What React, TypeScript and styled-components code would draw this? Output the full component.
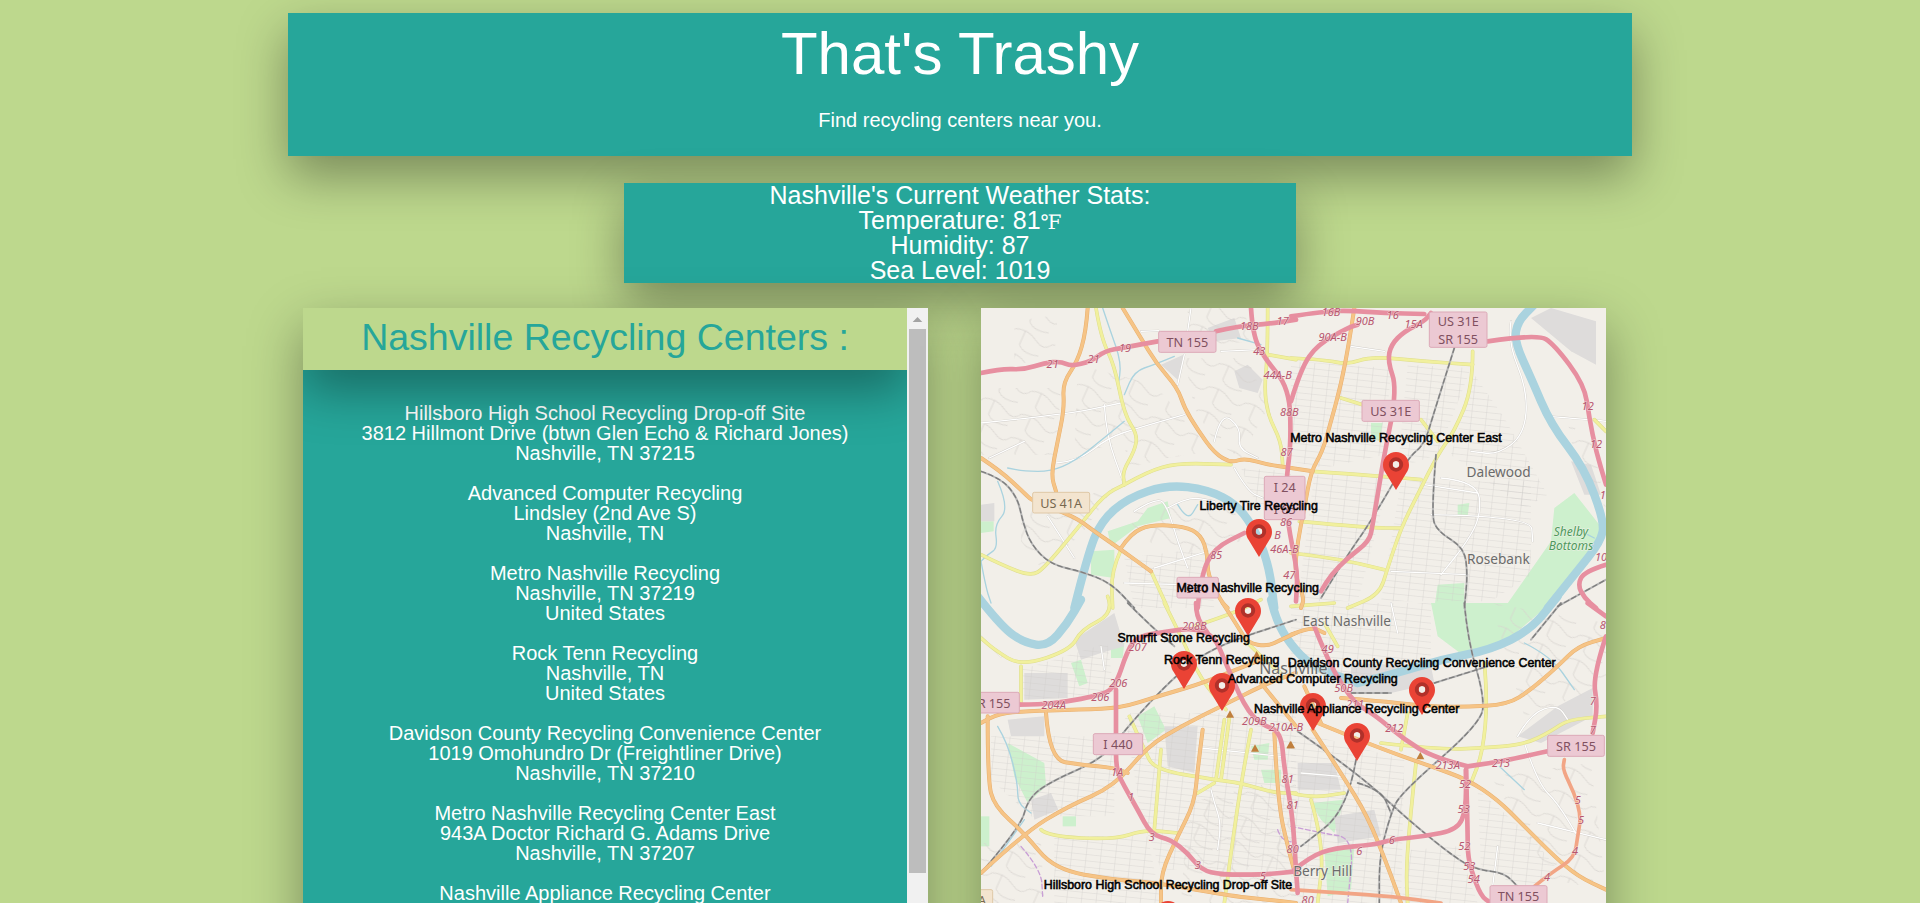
import React from "react";
import styled, { createGlobalStyle } from "styled-components";

const GlobalStyle = createGlobalStyle`
  html, body { margin: 0; padding: 0; height: 100%; overflow: hidden; background: #bdd88d; }
  body { font-family: "Liberation Sans", Arial, sans-serif; line-height: 1; color: #fff; }
`;

const raised = "box-shadow: 0 20px 50px rgba(0, 0, 0, 0.36);";

const Page = styled.div`
  width: 1344px;
  margin: 0 auto;
  padding-top: 13px;
`;
const Banner = styled.header`
  ${raised}
  background: #26a69a;
  height: 143px;
  padding-top: 11px;
  box-sizing: border-box;
  text-align: center;
`;
const BrandTitle = styled.h1`
  margin: 0 0 26px;
  font-size: 60px;
  line-height: 60px;
  font-weight: 400;
`;
const Tagline = styled.p`
  margin: 0;
  font-size: 20px;
  line-height: 20px;
`;
const Weather = styled.section`
  ${raised}
  background: #26a69a;
  width: 672px;
  height: 100px;
  margin: 27px auto 25px;
  font-size: 25px;
  line-height: 25px;
  text-align: center;
`;
const WeatherLine = styled.div`
  height: 25px;
`;
const Degrees = styled.span`
  font-family: "DejaVu Serif", "Liberation Serif", serif;
  font-size: 20px;
  line-height: 0;
`;
const Columns = styled.main`
  display: flex;
  gap: 53px;
  padding-left: 15px;
`;
const Centers = styled.section`
  ${raised}
  display: flex;
  flex: 0 0 625px;
  height: 685px;
  background: #26a69a;
  overflow: hidden;
`;
const CentersBody = styled.div`
  flex: 1;
  min-width: 0;
  overflow: hidden;
`;
const ScrollRail = styled.div`
  display: flex;
  flex-direction: column;
  flex: 0 0 21px;
  background: #f1f1f1;
`;
const ScrollArrow = styled.svg`
  display: block;
  width: 21px;
  height: 21px;
`;
const ScrollThumb = styled.div`
  height: 544px;
  margin: 0 2px;
  background: #bdbdbd;
`;
const CentersTitle = styled.h2`
  ${raised}
  position: relative;
  margin: 0;
  height: 62px;
  box-sizing: border-box;
  padding-top: 11px;
  background: #bdd88d;
  color: #26a69a;
  font-size: 37.5px;
  line-height: 37.5px;
  font-weight: 400;
  text-align: center;
`;
const CenterList = styled.div`
  padding: 33px 20px 10px;
`;
const Center = styled.p`
  margin: 0 0 20px;
  font-size: 20px;
  line-height: 20px;
  text-align: center;
`;
const MapBox = styled.section`
  ${raised}
  position: relative;
  flex: 0 0 625px;
  height: 685px;
  overflow: hidden;
  background: #f2efe9;
`;
const MapArt = styled.svg`
  display: block;
  width: 625px;
  height: 685px;
`;
const Stroke = styled.path<{ $c: string; $w: number; $dash?: string }>`
  fill: none;
  stroke: ${(p) => p.$c};
  stroke-width: ${(p) => p.$w};
  stroke-linecap: round;
  stroke-linejoin: round;
  ${(p) => (p.$dash ? `stroke-dasharray: ${p.$dash};` : "")}
`;
const Area = styled.polygon<{ $f: string }>`
  fill: ${(p) => p.$f};
`;
const Exit = styled.text`
  font-family: "Noto Sans", sans-serif;
  font-style: italic;
  font-size: 33px;
  fill: #b8566f;
  text-anchor: middle;
  dominant-baseline: central;
  paint-order: stroke;
  stroke: rgba(242, 239, 233, 0.7);
  stroke-width: 3px;
`;
const Place = styled.text<{ $green?: boolean; $big?: boolean }>`
  font-family: "Noto Sans", sans-serif;
  font-size: ${(p) => (p.$green ? 36 : p.$big ? 48 : 41)}px;
  font-style: ${(p) => (p.$green ? "italic" : "normal")};
  fill: ${(p) => (p.$green ? "#4d9a5c" : "#6b6b6b")};
  text-anchor: middle;
  dominant-baseline: central;
  paint-order: stroke;
  stroke: rgba(242, 239, 233, 0.7);
  stroke-width: 4px;
`;
const ShieldBox = styled.rect<{ $tan?: boolean }>`
  fill: ${(p) => (p.$tan ? "#f3e4cf" : "#ecc9d3")};
  stroke: ${(p) => (p.$tan ? "#dfc8a6" : "#dca9b7")};
  stroke-width: 3px;
`;
const ShieldText = styled.text<{ $tan?: boolean }>`
  font-family: "Noto Sans", sans-serif;
  font-size: 38px;
  fill: ${(p) => (p.$tan ? "#77684f" : "#80505f")};
  text-anchor: middle;
  dominant-baseline: central;
`;
const Peak = styled.path`
  fill: #c07f3e;
`;
const Pin = styled.div<{ $x: number; $y: number }>`
  position: absolute;
  left: ${(p) => p.$x}px;
  top: ${(p) => p.$y}px;
  width: 0;
  height: 0;
`;
const PinArt = styled.svg`
  position: absolute;
  left: -13px;
  top: -38px;
  width: 26px;
  height: 38px;
  filter: blur(0.4px);
`;
const PinLabel = styled.span<{ $lift: number }>`
  position: absolute;
  left: 0;
  top: ${(p) => -p.$lift - 6}px;
  transform: translateX(-50%);
  white-space: nowrap;
  color: #000;
  font-size: 12.4px;
  line-height: 12px;
  -webkit-text-stroke: 0.55px #000;
`;

type Seg = [number, string];
const off: Record<number, [number, number]> = { 1: [0, 0], 2: [930, 0], 3: [0, 885], 4: [930, 885] };
const pts = (q: number, s: string) =>
  s.split(" ").map((t) => {
    const [x, y] = t.split(",").map(Number);
    return [x + off[q][0], y + off[q][1]];
  });
const curve = ([q, s]: Seg) => {
  const a = pts(q, s);
  let d = `M${a[0][0]} ${a[0][1]}`;
  for (let i = 1; i < a.length - 1; i++) {
    const mx = (a[i][0] + a[i + 1][0]) / 2;
    const my = (a[i][1] + a[i + 1][1]) / 2;
    d += `Q${a[i][0]} ${a[i][1]} ${mx} ${my}`;
  }
  const l = a[a.length - 1];
  return d + `L${l[0]} ${l[1]}`;
};
const poly = ([q, s]: Seg) => pts(q, s).map((p) => p.join(",")).join(" ");

const parks: Seg[] = [
  [1, "380,670 470,640 500,600 560,580 570,630 470,655 390,715"],
  [1, "330,730 400,725 400,810 330,800"],
  [2, "640,900 780,700 790,600 850,555 925,650 930,710 800,880 760,900"],
  [2, "440,830 520,825 520,900 430,900"],
  [2, "500,590 535,585 530,625 500,625"],
  [2, "240,345 275,345 265,400 240,390"],
  [4, "420,0 780,0 650,110 520,160 440,100"],
  [3, "80,420 190,480 195,550 140,600 100,520"],
  [3, "470,340 520,310 555,380 500,420"],
  [3, "270,180 300,170 320,240 295,250"],
  [3, "390,130 430,120 425,165 390,165"],
  [3, "0,640 25,640 25,730 0,730"],
  [3, "810,430 865,420 860,470 820,470"],
  [3, "840,500 900,500 900,540 850,540"],
  [4, "60,600 160,590 130,690 90,650"],
  [4, "100,740 190,730 180,860 110,880"],
  [1, "0,640 38,640 38,670 0,675"],
  [3, "245,640 285,640 285,670 245,670"],
];
const greys: Seg[] = [
  [2, "720,30 780,0 915,40 915,170 840,130"],
  [1, "540,170 612,138 590,215"],
  [1, "760,190 800,170 845,215 830,255 775,240"],
  [1, "680,60 760,30 780,90 700,100"],
  [3, "280,110 400,30 430,130 360,150 300,170"],
  [3, "150,590 210,570 232,620 160,650"],
  [3, "80,350 190,340 190,400 90,400"],
  [3, "130,210 260,210 260,285 130,290"],
  [3, "550,370 650,370 640,510 560,490"],
  [4, "680,400 800,310 905,255 905,340 750,420"],
  [4, "180,180 420,190 430,240 300,270 180,270"],
  [4, "130,640 250,620 270,700 140,720"],
  [4, "20,480 130,480 150,560 20,560"],
  [1, "0,590 40,585 40,640 0,640"],
  [2, "840,460 900,470 930,560 880,560"],
];
const gridFine: Seg[] = [
  [2, "70,500 300,500 200,880 20,880"],
  [2, "330,520 720,520 720,800 600,880 270,880"],
  [2, "350,170 540,180 440,440 320,480"],
  [2, "550,200 640,330 770,560 700,600 480,440"],
  [2, "0,160 300,180 280,440 100,480 0,460"],
  [3, "30,400 400,400 400,640 150,640 30,530"],
  [3, "130,290 400,280 380,120 120,200"],
  [3, "430,330 945,330 945,800 540,800 480,640"],
  [3, "220,700 500,700 540,900 220,900"],
  [4, "0,380 340,470 330,900 0,900"],
  [4, "360,740 500,730 560,900 330,900"],
  [4, "560,560 720,700 800,800 700,860 570,790"],
  [4, "0,0 420,0 420,170 190,240 0,180"],
  [1, "430,750 680,720 700,900 460,900"],
  [1, "780,480 930,490 930,620 830,600"],
];
const gridCurvy: Seg[] = [
  [1, "0,240 240,240 225,440 0,440"],
  [1, "290,170 520,230 600,320 690,430 560,450 440,480 430,400 280,440"],
  [1, "610,150 800,150 860,300 780,450 700,400 640,300"],
  [1, "620,0 790,0 810,100 620,120"],
  [1, "120,610 400,540 300,680 180,780 120,700"],
  [1, "100,40 230,20 220,150 100,170"],
  [1, "460,600 760,600 780,700 600,740 450,680"],
  [3, "620,600 945,520 945,900 600,900"],
  [4, "600,520 900,480 945,860 780,830"],
  [4, "600,0 945,60 945,250 700,340"],
  [2, "830,340 905,400 945,600 860,500"],
  [3, "0,720 180,720 190,900 0,900"],
];
const white: Seg[] = [
  [1, "0,345 250,320 420,285"],
  [1, "370,290 375,380 430,530"],
  [1, "225,465 290,460 380,390 470,360 610,320"],
  [1, "630,0 620,70"],
  [1, "610,140 590,230"],
  [1, "25,450 130,400"],
  [1, "480,70 533,68"],
  [1, "720,130 830,125"],
  [1, "560,600 620,565 700,580"],
  [1, "460,610 530,565 560,600 590,700 620,780"],
  [1, "700,400 720,310 780,360 770,420 830,450"],
  [1, "520,780 680,730"],
  [1, "430,825 600,830"],
  [1, "760,480 800,550 845,570"],
  [1, "200,625 280,750"],
  [2, "770,325 900,335 945,340"],
  [2, "450,510 560,520 570,620 530,700 450,800"],
  [2, "300,790 530,800"],
  [2, "400,530 560,555"],
  [2, "420,620 720,625 725,700"],
  [2, "660,40 650,100 710,250 700,380 620,440 540,430"],
  [2, "180,115 280,130"],
  [3, "360,130 370,200"],
  [3, "660,435 900,460"],
  [3, "690,560 700,600 720,660 710,740"],
  [3, "0,100 60,160"],
  [4, "680,400 720,330 800,305 830,350"],
  [4, "700,420 740,540 800,600 860,700"],
  [4, "620,730 600,890"],
  [4, "740,660 945,710"],
  [4, "30,510 150,520"],
  [4, "300,0 320,90"],
];
const creeks: Seg[] = [
  [1, "365,0 385,60 422,165 410,240"],
  [1, "580,145 520,170 460,190 430,260"],
  [1, "430,340 370,390 280,460 210,490 130,490 80,480"],
  [1, "50,520 85,600 40,650 50,720 20,740 0,760"],
  [1, "0,760 15,840 30,885"],
  [1, "770,90 840,110"],
  [3, "50,370 80,420 110,540 110,600 150,630"],
  [3, "130,650 30,790"],
  [4, "625,490 700,560"],
  [4, "700,120 780,160 850,260"],
  [2, "890,680 910,690"],
  [1, "590,590 620,640 650,590"],
];
const rivers: Seg[] = [
  [1, "280,900 320,740 360,640 440,570 560,530 680,545 770,590 830,680 865,780 880,900"],
  [3, "870,-10 885,50 925,120 990,190 1130,240"],
  [4, "200,240 300,215 450,170 600,140 720,80 800,-20"],
  [2, "770,900 850,800 930,700 940,640 880,480 780,350 720,210 670,100 680,40 730,-10"],
  [3, "-10,-20 60,70 130,120 200,130 260,60 300,-10"],
];
const yellow: Seg[] = [
  [1, "345,0 360,90 400,170 430,320 470,380 460,430 425,490 430,530"],
  [1, "430,530 500,490 590,465 750,470"],
  [1, "0,740 60,770 150,805 190,780 290,660 370,560 430,530"],
  [1, "860,0 860,140 850,240 860,320 900,400 905,470"],
  [1, "860,140 945,155"],
  [2, "0,150 100,155 170,170 240,145 400,160 545,170"],
  [2, "545,130 545,240 490,370 440,440 380,560 330,660 290,780 265,860 170,900"],
  [2, "150,270 215,290"],
  [2, "390,335 440,400"],
  [2, "65,490 280,505 390,515"],
  [2, "25,640 240,660 330,660"],
  [2, "0,735 130,750 280,785"],
  [2, "910,335 945,370"],
  [1, "420,725 390,790 395,900"],
  [3, "380,-20 400,30 300,80 270,140 120,190 40,140 0,105"],
  [3, "120,190 120,300"],
  [1, "510,790 560,900"],
  [3, "550,0 600,100 660,230 735,320"],
  [3, "445,340 490,440 520,500 700,530 780,540 880,570 945,570"],
  [3, "540,440 520,680"],
  [3, "730,350 705,530"],
  [3, "745,345 720,530"],
  [3, "810,380 780,540 750,750 730,900"],
  [3, "180,680 200,700 400,710 490,680 590,690"],
  [3, "650,570 700,540"],
  [3, "640,70 760,30 840,-10"],
  [3, "800,120 860,180 900,210"],
  [4, "580,180 590,290 575,450 540,540"],
  [4, "270,420 450,440 570,435 700,425 780,385 830,350 945,340"],
  [4, "350,330 330,440"],
  [4, "375,480 360,620 345,800 350,900"],
  [4, "60,590 100,730 80,900"],
  [4, "0,570 60,585 160,570"],
  [4, "100,60 140,130"],
  [4, "0,10 130,0"],
];
const orange: Seg[] = [
  [1, "425,0 480,90 525,165 590,240 610,300 650,365 700,435 750,465 790,450 860,470 930,480"],
  [2, "0,480 65,490"],
  [1, "320,0 315,70 290,160 245,225 250,300 230,400 210,500 225,550"],
  [2, "190,0 175,100 150,230 120,340 95,430 60,490 40,600 20,700 10,800 40,870 30,900"],
  [1, "0,450 60,490 130,555 155,580 280,625 340,670 420,725 510,790"],
  [1, "420,720 450,675 510,650 610,655 660,680 680,740 680,800 720,880 740,900"],
  [3, "725,0 770,70 800,120 860,130 900,110 945,90"],
  [3, "0,360 40,335 115,325 300,320 420,315 530,280 650,245 740,210 840,170"],
  [3, "0,810 130,690 260,610 400,550 500,430 600,370 720,310 860,240 945,210"],
  [3, "20,340 20,530 40,610 130,690 220,800 400,830 530,840 760,880 860,890 945,900"],
  [3, "195,330 205,470 300,485 400,495 440,510"],
  [3, "665,380 650,500 640,600 590,700 540,810 540,900"],
  [3, "880,390 890,600 925,750 945,820"],
  [3, "840,240 945,370"],
  [4, "80,360 250,430 420,490 530,530 620,590 700,670 790,760 860,820 945,860"],
  [4, "40,250 90,360"],
  [4, "65,380 150,510 230,640 290,790 330,900"],
  [4, "150,285 280,295 400,310 520,312 650,305 720,260 800,190 860,130 945,105"],
  [4, "0,95 60,70 100,90"],
];
const salmon: Seg[] = [
  [4, "730,850 780,810 850,765 860,700 870,640 850,570 815,500 820,470"],
  [4, "0,860 150,870 300,880 450,900"],
  [3, "720,815 850,815"],
];
const pink: Seg[] = [
  [1, "0,195 60,182 130,185 190,165 240,160 270,175 330,160 370,130 430,118 530,100"],
  [1, "705,70 770,55 860,48 945,35"],
  [2, "0,25 100,10 180,8 280,15 400,18"],
  [1, "810,0 815,80 850,150 925,240 930,400 918,500 915,560 920,640 935,720 950,800 945,880"],
  [2, "0,280 30,180 80,110 170,60 200,50"],
  [2, "300,340 280,440 265,530 245,650 235,700 170,750 120,800 90,850"],
  [2, "300,340 318,240 290,160 300,110 340,70 400,40 420,15"],
  [2, "590,100 740,78 790,110 880,230 895,330 915,430 945,530"],
  [2, "945,770 880,790 860,830 880,870 915,900"],
  [4, "890,0 945,40"],
  [4, "945,100 905,220 920,310 905,390"],
  [4, "770,445 680,465 600,480 530,490"],
  [4, "530,490 430,465 340,410 250,335 190,300 130,210 90,120 70,70"],
  [3, "115,305 175,305 260,295 340,280 400,260 440,140 470,100 560,85 640,75 700,100 730,170 790,310 840,365 900,385 910,500 935,640 945,800"],
  [3, "405,260 405,400 405,500 430,550 470,620 510,695 570,710 620,750 660,800 720,815 850,815 945,805"],
  [1, "650,900 660,800 700,720 790,675"],
  [3, "645,0 645,40 680,90"],
  [4, "10,800 60,760 130,735 250,725 300,710 400,700 500,680 525,620 525,500"],
  [4, "525,500 530,680 530,750 540,800 570,880 600,900"],
  [4, "15,800 20,870"],
  [3, "0,300 115,305"],
];
const rails: Seg[] = [
  [1, "0,490 60,510 110,570 125,640 150,710 210,770 300,790 390,825 460,900"],
  [3, "440,0 500,60 580,130"],
  [3, "0,810 120,670 140,590 200,540 370,465 440,370 580,220 700,130 945,50"],
  [2, "490,120 430,310 400,410 350,450 240,640 170,740 90,870"],
  [2, "435,440 420,620 440,670 520,720 530,800 520,900"],
  [4, "520,0 530,110 580,280 570,360 330,570 300,630 265,760 265,900"],
  [4, "20,385 200,510 350,650 500,770 560,800 640,810 680,850"],
  [4, "195,470 170,620 30,730"],
  [4, "430,240 590,190"],
  [4, "200,540 270,560 300,630"],
  [4, "810,0 720,110"],
  [2, "800,895 945,815"],
  [4, "180,270 300,270"],
];
const trails: Seg[] = [
  [3, "890,680 900,710 945,720"],
  [4, "0,670 90,690 190,705 170,900"],
  [3, "120,730 180,800 185,880"],
];

const exits: [number, number, number, string][] = [
  [1, 215, 165, "21"], [1, 338, 152, "21"], [1, 432, 118, "19"], [1, 805, 52, "18B"], [1, 905, 38, "17"],
  [1, 835, 128, "43"], [1, 890, 200, "44A-B"], [1, 925, 310, "88B"], [1, 917, 430, "87"], [1, 915, 640, "86"],
  [1, 705, 740, "85"], [1, 910, 722, "46A-B"], [1, 925, 800, "47"], [1, 890, 680, "B"],
  [2, 120, 10, "16B"], [2, 305, 18, "16"], [2, 368, 45, "15A"], [2, 222, 38, "90B"], [2, 125, 85, "90A-B"],
  [2, 890, 292, "12"], [2, 915, 405, "12"], [2, 930, 745, "10"], [2, 935, 560, "1"],
  [3, 640, 68, "208B"], [3, 470, 130, "207"], [3, 412, 238, "206"], [3, 358, 280, "206"], [3, 218, 303, "204A"],
  [3, 408, 505, "1A"], [3, 450, 580, "1"], [3, 512, 700, "3"], [3, 650, 785, "3"], [3, 820, 352, "209B"],
  [3, 915, 370, "210A-B"], [3, 845, 818, "5"], [3, 920, 525, "81"], [3, 935, 605, "81"], [3, 935, 735, "80"],
  [4, 110, 135, "49"], [4, 158, 252, "50B"], [4, 192, 300, "211"], [4, 310, 372, "212"], [4, 470, 485, "213A"],
  [4, 630, 477, "213"], [4, 522, 540, "52"], [4, 518, 617, "53"], [4, 520, 728, "52"], [4, 535, 787, "53"],
  [4, 548, 826, "54"], [4, 302, 710, "6"], [4, 205, 742, "6"], [4, 50, 890, "80"],
  [4, 905, 293, "7"], [4, 905, 378, "7"], [4, 860, 590, "5"], [4, 870, 650, "5"], [4, 852, 742, "4"], [4, 768, 820, "4"], [4, 935, 65, "8"],
];
const shields: { x: number; y: number; w: number; h: number; t: string[]; tan?: boolean }[] = [
  { x: 533, y: 70, w: 172, h: 63, t: ["TN 155"] },
  { x: 1345, y: 12, w: 173, h: 106, t: ["US 31E", "SR 155"] },
  { x: 1143, y: 277, w: 172, h: 63, t: ["US 31E"] },
  { x: 850, y: 505, w: 122, h: 130, t: ["I 24", "I 65"] },
  { x: 155, y: 553, w: 171, h: 62, t: ["US 41A"], tan: true },
  { x: 588, y: 808, w: 124, h: 62, t: ["I 40"] },
  { x: -57, y: 1153, w: 172, h: 62, t: ["SR 155"] },
  { x: 337, y: 1277, w: 148, h: 63, t: ["I 440"] },
  { x: 1700, y: 1282, w: 170, h: 63, t: ["SR 155"] },
  { x: 1527, y: 1733, w: 171, h: 63, t: ["TN 155"] },
  { x: -130, y: 1745, w: 165, h: 63, t: ["US 41A"], tan: true },
];
const peaks: [number, number][] = [[747, 1218], [822, 1320], [928, 1310], [827, 1040], [1318, 1343], [930, 1310]];

const pins = [
  { x: 415, y: 182, lift: 52, name: "Metro Nashville Recycling Center East" },
  { x: 277.7, y: 248.5, lift: 51, name: "Liberty Tire Recycling" },
  { x: 266.7, y: 328, lift: 48, name: "Metro Nashville Recycling" },
  { x: 202.7, y: 381, lift: 51, name: "Smurfit Stone Recycling" },
  { x: 240.7, y: 403.3, lift: 51, name: "Rock Tenn Recycling" },
  { x: 440.7, y: 406.7, lift: 52, name: "Davidson County Recycling Convenience Center" },
  { x: 331.7, y: 423.3, lift: 52, name: "Advanced Computer Recycling" },
  { x: 375.7, y: 453.3, lift: 52, name: "Nashville Appliance Recycling Center" },
  { x: 187, y: 631, lift: 54, name: "Hillsboro High School Recycling Drop-off Site" },
];

const centers = [
  ["Hillsboro High School Recycling Drop-off Site", "3812 Hillmont Drive (btwn Glen Echo & Richard Jones)", "Nashville, TN 37215"],
  ["Advanced Computer Recycling", "Lindsley (2nd Ave S)", "Nashville, TN"],
  ["Metro Nashville Recycling", "Nashville, TN 37219", "United States"],
  ["Rock Tenn Recycling", "Nashville, TN", "United States"],
  ["Davidson County Recycling Convenience Center", "1019 Omohundro Dr (Freightliner Drive)", "Nashville, TN 37210"],
  ["Metro Nashville Recycling Center East", "943A Doctor Richard G. Adams Drive", "Nashville, TN 37207"],
  ["Nashville Appliance Recycling Center", "Nashville, TN", "United States"],
];

const Lines = ({ set, c, w, dash }: { set: Seg[]; c: string; w: number; dash?: string }) => (
  <>
    {set.map((s, i) => (
      <Stroke key={i} d={curve(s)} $c={c} $w={w} $dash={dash} />
    ))}
  </>
);
const Fills = ({ set, f }: { set: Seg[]; f: string }) => (
  <>
    {set.map((s, i) => (
      <Area key={i} points={poly(s)} $f={f} />
    ))}
  </>
);

const CityMap = () => (
  <MapArt viewBox="0 0 1875 2055">
    <defs>
      <filter id="soft" x="-2%" y="-2%" width="104%" height="104%">
        <feGaussianBlur stdDeviation="1.8" />
      </filter>
      <pattern id="fine" width="44" height="19" patternUnits="userSpaceOnUse" patternTransform="rotate(6)">
        <path d="M0 0H44M0 0V19" fill="none" stroke="#cfccc8" strokeWidth="2" />
      </pattern>
      <pattern id="wavy" width="120" height="76" patternUnits="userSpaceOnUse" patternTransform="rotate(24)">
        <path d="M0 14Q36 0 70 22T120 14M30 8V54Q52 76 96 62" fill="none" stroke="#d6d3ce" strokeWidth="2.2" />
      </pattern>
    </defs>
    <rect width="1875" height="2055" fill="#f2efe9" />
    <g filter="url(#soft)">
      <Fills set={parks} f="#cdf0cd" />
      <Fills set={greys} f="#dedcdb" />
      <Fills set={gridFine} f="url(#fine)" />
      <Fills set={gridCurvy} f="url(#wavy)" />
      <Lines set={white} c="#d0cdc8" w={6} />
      <Lines set={white} c="#ffffff" w={4} />
      <Lines set={creeks} c="#aad3df" w={4} />
      <Lines set={rivers} c="#aad3df" w={25} />
      <Lines set={trails} c="#c99fd6" w={4} dash="14 8" />
      <Lines set={yellow} c="#dedd8e" w={11} />
      <Lines set={yellow} c="#f1f09d" w={8} />
      <Lines set={rails} c="#b5b5b5" w={6} />
      <Lines set={rails} c="#7e7e7e" w={4} dash="14 10" />
      <Lines set={orange} c="#e8b070" w={12} />
      <Lines set={orange} c="#f6c486" w={9} />
      <Lines set={salmon} c="#f2a585" w={11} />
      <Lines set={pink} c="#e78fa0" w={14} />
      {peaks.map(([x, y], i) => (
        <Peak key={i} d={`M${x} ${y - 11}l12 22h-24z`} />
      ))}
    </g>
    {shields.map((s, i) => (
      <g key={i}>
        <ShieldBox x={s.x} y={s.y} width={s.w} height={s.h} rx={5} $tan={s.tan} />
        {s.t.map((l, j) => (
          <ShieldText key={j} x={s.x + s.w / 2} y={s.y + (s.h / s.t.length) * (j + 0.5)} $tan={s.tan}>
            {l}
          </ShieldText>
        ))}
      </g>
    ))}
    {exits.map(([q, x, y, t], i) => (
      <Exit key={i} x={x + off[q][0]} y={y + off[q][1]}>
        {t}
      </Exit>
    ))}
    <Place x={1553} y={491}>Dalewood</Place>
    <Place x={1552} y={750}>Rosebank</Place>
    <Place x={1097} y={937}>East Nashville</Place>
    <Place x={1025} y={1688}>Berry Hill</Place>
    <Place x={937} y={1080} $big>Nashville</Place>
    <Place x={1770} y={670} $green>Shelby</Place>
    <Place x={1770} y={712} $green>Bottoms</Place>
  </MapArt>
);

const PinIcon = () => (
  <PinArt viewBox="0 0 26 38">
    <path
      fillRule="evenodd"
      fill="#ea4335"
      d="M13 0C5.8 0 0 5.8 0 13c0 3 1 5.6 2.7 8L13 38l10.3-17c1.7-2.4 2.7-5 2.7-8C26 5.8 20.2 0 13 0zM13 9.1a3.4 3.4 0 1 1 0 6.8 3.4 3.4 0 0 1 0-6.8z"
    />
    <path
      fillRule="evenodd"
      fill="#b0312a"
      d="M13 5.3a7.2 7.2 0 1 1 0 14.4 7.2 7.2 0 0 1 0-14.4zM13 9.1a3.4 3.4 0 1 0 0 6.8 3.4 3.4 0 0 0 0-6.8z"
    />
  </PinArt>
);

export default function App() {
  return (
    <>
      <GlobalStyle />
      <Page>
        <Banner>
          <BrandTitle>That's Trashy</BrandTitle>
          <Tagline>Find recycling centers near you.</Tagline>
        </Banner>
        <Weather>
          <WeatherLine>Nashville's Current Weather Stats:</WeatherLine>
          <WeatherLine>
            Temperature: 81<Degrees>℉</Degrees>
          </WeatherLine>
          <WeatherLine>Humidity: 87</WeatherLine>
          <WeatherLine>Sea Level: 1019</WeatherLine>
        </Weather>
        <Columns>
          <Centers>
            <CentersBody>
              <CentersTitle>Nashville Recycling Centers :</CentersTitle>
              <CenterList>
                {centers.map((c) => (
                  <Center key={c[0]}>
                    {c[0]}
                    <br />
                    {c[1]}
                    <br />
                    {c[2]}
                  </Center>
                ))}
              </CenterList>
            </CentersBody>
            <ScrollRail>
              <ScrollArrow viewBox="0 0 21 21">
                <path d="M5.7 14 10.5 9l4.8 5z" fill="#a3a3a3" />
              </ScrollArrow>
              <ScrollThumb />
            </ScrollRail>
          </Centers>
          <MapBox>
            <CityMap />
            {pins.map((p) => (
              <Pin key={p.name} $x={p.x} $y={p.y}>
                <PinIcon />
                <PinLabel $lift={p.lift}>{p.name}</PinLabel>
              </Pin>
            ))}
          </MapBox>
        </Columns>
      </Page>
    </>
  );
}
